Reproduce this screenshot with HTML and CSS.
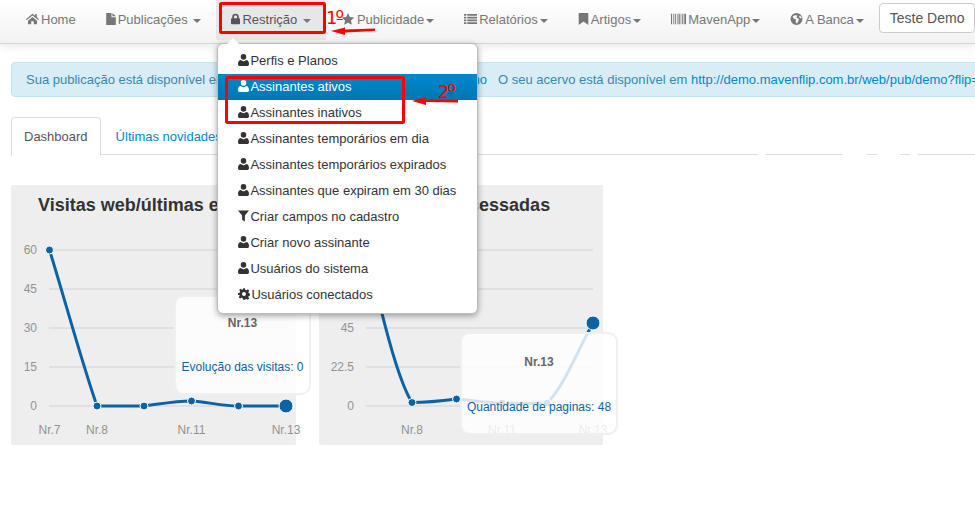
FILE: index.html
```html
<!DOCTYPE html>
<html lang="pt-BR">
  <head>
    <meta charset="UTF-8" />
    <title>Dashboard</title>
    <link rel="stylesheet" href="styles.css">
  </head>

  <body>
    <svg class="icon-defs" width="0" height="0">
      <symbol id="i-home" viewBox="0 1 14 12.500"><path d="M7 1.500 0 7.400l.9 1L7 3.400l6.100 5 .9-1-2.300-2V2H9.600v1.700z M2.200 9 7 5l4.800 4v4H8.400V9.800H5.600V13H2.200z"/></symbol>
      <symbol id="i-file" viewBox="2 1 10 12.500"><path d="M2 1h5.500v4.500H12V13.500H2z M8.500 1 12 4.500H8.500z"/></symbol>
      <symbol id="i-lock" viewBox="1.500 .5 11 13"><path d="M3 6V4.500a4 4 0 0 1 8 0V6h.5a1 1 0 0 1 1 1v5.500a1 1 0 0 1-1 1h-9a1 1 0 0 1-1-1V7a1 1 0 0 1 1-1zm2 0h4V4.500a2 2 0 0 0-4 0z"/></symbol>
      <symbol id="i-star" viewBox="0 .5 14 13"><path d="m7 .5 2 4.400 4.800.5-3.600 3.200 1 4.700L7 11l-4.200 2.300 1-4.700L.2 5.400 5 4.900z"/></symbol>
      <symbol id="i-list" viewBox="0 2 14 11"><path d="M0 2h2.500v2H0z M3.500 2H14v2H3.500z M0 5h2.500v2H0z M3.500 5H14v2H3.500z M0 8h2.500v2H0z M3.500 8H14v2H3.500z M0 11h2.500v2H0z M3.500 11H14v2H3.500z"/></symbol>
      <symbol id="i-bookmark" viewBox="2 1 10 12.500"><path d="M2 1h10v12.500L7 9.800l-5 3.700z"/></symbol>
      <symbol id="i-barcode" viewBox="0 2 14 10"><path d="M0 2h1v10H0z M2 2h.6v10H2z M3.500 2h1v10h-1z M5.500 2h.6v10h-.6z M7 2h1.200v10H7z M9 2h.6v10H9z M10.500 2h1v10h-1z M12.400 2H14v10h-1.600z"/></symbol>
      <symbol id="i-globe" viewBox=".8 .8 12.400 12.400"><path fill-rule="evenodd" d="M7 .8a6.200 6.200 0 1 1 0 12.400A6.200 6.200 0 0 1 7 .8z M5 3 3 4.500l1 2 2.500 1L6 10l1.500 2 1.500-3 .5-2L7 5.500 8 3.500z M10.500 3.500l-1 1.500 2 1.500 1-1z"/></symbol>
      <symbol id="i-user" viewBox="1 .5 12 13"><path d="M7 .5a3 3 0 0 1 3 3.200 3 3 0 0 1-6 0A3 3 0 0 1 7 .5z M4.200 7a4 4 0 0 0 5.600 0c2.200 0 3.200 2 3.200 4.500 0 1.300-.8 2-2 2H3c-1.200 0-2-.7-2-2C1 9 2 7 4.200 7z"/></symbol>
      <symbol id="i-filter" viewBox="1 1.500 12 12"><path d="M1 1.500h12L8.500 7v6.500l-3-2V7z"/></symbol>
      <symbol id="i-cog" viewBox=".6 .8 12.800 12.400"><path fill-rule="evenodd" d="M6 .8h2l.4 1.800 1.200.5L11.200 2l1.400 1.400-1 1.600.5 1.200 1.800.4v2l-1.800.4-.5 1.200 1 1.600-1.400 1.400-1.600-1-1.200.5L8 13.200H6l-.4-1.800-1.200-.5-1.600 1-1.400-1.400 1-1.600-.5-1.200L.6 8V6l1.800-.4.5-1.200-1-1.600L3.300 1.400l1.600 1 1.200-.5z M7 4.900a2.100 2.100 0 1 0 0 4.200 2.100 2.100 0 0 0 0-4.200z"/></symbol>
    </svg>

    <nav class="navbar">
      <ul class="nav">
        <li class="nav-item"><a><svg class="icon w13"><use href="#i-home"/></svg>Home</a></li>
        <li class="nav-item"><a><svg class="icon w10"><use href="#i-file"/></svg>Publicações <b class="caret"></b></a></li>
        <li class="nav-item open">
          <a><svg class="icon w9"><use href="#i-lock"/></svg>Restrição <b class="caret"></b></a>
          <ul class="dropdown">
            <li><svg class="icon w11"><use href="#i-user"/></svg>Perfis e Planos</li>
            <li class="active"><svg class="icon w11"><use href="#i-user"/></svg>Assinantes ativos</li>
            <li><svg class="icon w11"><use href="#i-user"/></svg>Assinantes inativos</li>
            <li><svg class="icon w11"><use href="#i-user"/></svg>Assinantes temporários em dia</li>
            <li><svg class="icon w11"><use href="#i-user"/></svg>Assinantes temporários expirados</li>
            <li><svg class="icon w11"><use href="#i-user"/></svg>Assinantes que expiram em 30 dias</li>
            <li><svg class="icon w11"><use href="#i-filter"/></svg>Criar campos no cadastro</li>
            <li><svg class="icon w11"><use href="#i-user"/></svg>Criar novo assinante</li>
            <li><svg class="icon w11"><use href="#i-user"/></svg>Usuários do sistema</li>
            <li><svg class="icon w12"><use href="#i-cog"/></svg>Usuários conectados</li>
          </ul>
        </li>
        <li class="nav-item"><a><svg class="icon w14"><use href="#i-star"/></svg>Publicidade<b class="caret"></b></a></li>
        <li class="nav-item"><a><svg class="icon w13"><use href="#i-list"/></svg>Relatórios<b class="caret"></b></a></li>
        <li class="nav-item"><a><svg class="icon w11"><use href="#i-bookmark"/></svg>Artigos<b class="caret"></b></a></li>
        <li class="nav-item"><a><svg class="icon w15"><use href="#i-barcode"/></svg>MavenApp<b class="caret"></b></a></li>
        <li class="nav-item"><a><svg class="icon w13"><use href="#i-globe"/></svg>A Banca<b class="caret"></b></a></li>
      </ul>
      <div class="search-box">Teste Demo</div>
    </nav>

    <main class="content">
      <div class="alert">
        <span>Sua publicação está disponível em <a>http://demo.mavenflip.com.br/web/pub/demo</a></span>
        <span>O seu acervo está disponível em <a>http://demo.mavenflip.com.br/web/pub/demo?flip=</a></span>
      </div>

      <ul class="tabs">
        <li class="tab active">Dashboard</li>
        <li class="tab">Últimas novidades</li>
      </ul>

      <div class="charts">
        <section class="chart-card">
          <h3>Visitas web/últimas edições</h3>
          <svg class="chart" width="285" height="220">
            <g class="grid">
              <line x1="38" x2="275" y1="25" y2="25"/><line x1="38" x2="275" y1="64" y2="64"/>
              <line x1="38" x2="275" y1="103" y2="103"/><line x1="38" x2="275" y1="142" y2="142"/>
              <line x1="38" x2="275" y1="181" y2="181"/>
            </g>
            <g class="y-labels">
              <text x="26" y="29">60</text><text x="26" y="68">45</text><text x="26" y="107">30</text>
              <text x="26" y="146">15</text><text x="26" y="185">0</text>
            </g>
            <g class="x-labels">
              <text x="38.500" y="209">Nr.7</text><text x="86" y="209">Nr.8</text>
              <text x="180.500" y="209">Nr.11</text><text x="275" y="209">Nr.13</text>
            </g>
            <path class="line" d="M38.500 25C54 75 70 135 86 181C102 181 117 181 133 181C149 179 165 176 180.500 176C196 177 212 181 227.500 181C243 181 259 181 275 181"/>
            <g class="points">
              <circle cx="38.500" cy="25" r="4"/><circle cx="86" cy="181" r="4"/><circle cx="133" cy="181" r="4"/>
              <circle cx="180.500" cy="176" r="4"/><circle cx="227.500" cy="181" r="4"/><circle cx="275" cy="181" r="7"/>
            </g>
          </svg>
          <div class="chart-tip tip-visits">
            <div class="tip-title">Nr.13</div>
            <div class="tip-value">Evolução das visitas: 0</div>
          </div>
        </section>

        <section class="chart-card">
          <h3>Páginas mais acessadas</h3>
          <svg class="chart" width="284" height="220">
            <g class="grid">
              <line x1="47" x2="274" y1="25" y2="25"/><line x1="47" x2="274" y1="64" y2="64"/>
              <line x1="47" x2="274" y1="103" y2="103"/><line x1="47" x2="274" y1="142" y2="142"/>
              <line x1="47" x2="274" y1="181" y2="181"/>
            </g>
            <g class="y-labels">
              <text x="35" y="29">90</text><text x="35" y="68">67.5</text><text x="35" y="107">45</text>
              <text x="35" y="146">22.5</text><text x="35" y="185">0</text>
            </g>
            <g class="x-labels">
              <text x="93" y="209">Nr.8</text><text x="183" y="209">Nr.11</text><text x="274" y="209">Nr.13</text>
            </g>
            <path class="line" d="M47 25C60 75 76 150 93 177.500C108 177.500 122 176 137.500 174C153 175 168 178 183 178C198 178 213 179 228 178C243 165 259 125 274 98"/>
            <g class="points">
              <circle cx="47" cy="25" r="4"/><circle cx="93" cy="177.500" r="4"/><circle cx="137.500" cy="174" r="4"/>
              <circle cx="183" cy="178" r="4"/><circle cx="228" cy="178" r="4"/><circle cx="274" cy="98" r="7"/>
            </g>
          </svg>
          <div class="chart-tip tip-pages">
            <div class="tip-title">Nr.13</div>
            <div class="tip-value">Quantidade de paginas: 48</div>
          </div>
        </section>
      </div>
    </main>

    <!-- marcacoes em vermelho feitas sobre a captura -->
    <svg class="marks" width="975" height="530">
      <rect class="mark-box" x="220.500" y="3.500" width="104" height="29" rx="1"/>
      <rect class="mark-box" x="226.500" y="77.500" width="177" height="45" rx="1"/>
      <path class="mark-arrow" d="M331 31 345 27.500 345 29.500 375 28.500 375 31 345 32.500 345 35z"/>
      <path class="mark-arrow" d="M412 101 426 97 426 99.500 458 100 458 102.500 426 102 426 105z"/>
      <text class="mark-text" x="326" y="24">1º</text>
      <text class="mark-text" x="438" y="98">2º</text>
    </svg>
  </body>
</html>
```

FILE: styles.css
```css
html, body {
  margin: 0;
  height: 530px;
  overflow: hidden;
  background: white;
  font-family: "Liberation Sans", Arial, sans-serif;
  font-size: 13px;
  color: #333;
}

ul {
  list-style: none;
  margin: 0;
  padding: 0;
}

.icon-defs {
  display: block;
  height: 0;
}

.icon {
  height: 12px;
  margin-right: 2px;
  fill: currentColor;
  vertical-align: -1px;
}

.w9 { width: 9px; }
.w10 { width: 10px; }
.w11 { width: 11px; }
.w12 { width: 12px; }
.w13 { width: 13px; }
.w14 { width: 14px; }
.w15 { width: 15px; }

/* barra de cima */
.navbar {
  display: flex;
  height: 44px;
  padding-left: 11px;
  box-sizing: border-box;
  background: linear-gradient(#ffffff, #f2f2f2);
  border-bottom: 1px solid #d4d4d4;
  box-shadow: 0 2px 10px rgba(0, 0, 0, 0.1);
  position: relative;
  z-index: 5;
}

.nav {
  display: flex;
}

.nav-item {
  position: relative;
  height: 40px;
}

.nav-item > a {
  display: block;
  padding: 12px 15px 0;
  height: 28px;
  line-height: 15px;
  color: #777;
  white-space: nowrap;
}

.nav-item.open > a {
  background: #e7e7e7;
  color: #555;
}

.caret {
  display: inline-block;
  width: 0;
  height: 0;
  margin-left: 2px;
  vertical-align: middle;
  border-top: 4px solid #777;
  border-left: 4px solid transparent;
  border-right: 4px solid transparent;
}

.search-box {
  margin-top: 3px;
  width: 200px;
  height: 28px;
  padding-left: 10px;
  line-height: 28px;
  font-size: 14px;
  color: #555;
  background: white;
  border: 1px solid #ccc;
  border-radius: 4px;
}

/* menu aberto */
.dropdown {
  position: absolute;
  top: 43px;
  left: 1px;
  width: 259px;
  padding: 4px 0 5px;
  background: white;
  border: 1px solid #bbb;
  border-radius: 6px;
  box-shadow: 0 2px 6px rgba(0, 0, 0, 0.35);
  z-index: 10;
}

.dropdown::before {
  content: "";
  position: absolute;
  top: -6px;
  left: 9px;
  border-left: 6px solid transparent;
  border-right: 6px solid transparent;
  border-bottom: 6px solid white;
}

.dropdown li {
  height: 26px;
  line-height: 26px;
  padding-left: 20px;
  color: #333;
  white-space: nowrap;
}

.dropdown .icon {
  margin-right: 1px;
}

.dropdown li.active {
  color: white;
  background: linear-gradient(#0088cc, #0077b3);
}

/* conteudo */
.content {
  padding: 18px 0 0 11px;
}

.alert {
  display: flex;
  gap: 11px;
  width: 1000px;
  height: 33px;
  line-height: 33px;
  padding-left: 14px;
  white-space: nowrap;
  color: #3a87ad;
  background: #d9edf7;
  border: 1px solid #bce8f1;
  border-radius: 4px;
}

.alert a {
  color: #0088cc;
}

.tabs {
  display: flex;
  margin-top: 20px;
  height: 38px;
  background: linear-gradient(to right, #ddd 747px, white 747px, white 754px, #ddd 754px, #ddd 832px, white 832px, white 856px, #ddd 856px, #ddd 866px, white 866px, white 889px, #ddd 889px, #ddd 899px, white 899px, white 907px, #ddd 907px) bottom / 100% 1px no-repeat;
}

.tab {
  height: 37px;
  padding: 0 14px;
  line-height: 37px;
  color: #0088cc;
  border: 1px solid transparent;
}

.tab.active {
  padding: 0 12px;
  color: #555;
  background: white;
  border-color: #ddd;
  border-bottom-color: white;
  border-radius: 4px 4px 0 0;
}

.charts {
  display: flex;
  gap: 23px;
  margin-top: 30px;
}

.chart-card {
  position: relative;
  width: 285px;
  height: 260px;
  background: #eeeeee;
  border-radius: 2px;
}

.chart-card + .chart-card {
  width: 284px;
}

.chart-card h3 {
  margin: 0;
  height: 40px;
  padding-left: 27px;
  line-height: 40px;
  font-size: 18px;
  color: #333;
  white-space: nowrap;
}

.chart-card + .chart-card h3 {
  padding-left: 20px;
}

.chart {
  display: block;
  overflow: visible;
}

.grid line {
  stroke: #e0e0e0;
  stroke-width: 2;
}

.y-labels text,
.x-labels text {
  font-size: 12px;
  fill: #929292;
}

.y-labels text {
  text-anchor: end;
}

.x-labels text {
  text-anchor: middle;
}

.line {
  fill: none;
  stroke: #0b62a4;
  stroke-width: 3;
}

.points circle {
  fill: #0b62a4;
  stroke: white;
  stroke-width: 1;
}

.chart-tip {
  position: absolute;
  box-sizing: border-box;
  font-size: 12px;
  text-align: center;
  white-space: nowrap;
  background: rgba(255, 255, 255, 0.82);
  border: 2px solid rgba(238, 238, 238, 0.9);
  border-radius: 10px;
}

.tip-visits {
  left: 163px;
  top: 110px;
  width: 137px;
  height: 100px;
}

.tip-pages {
  left: 141px;
  top: 147px;
  width: 158px;
  height: 103px;
}

.tip-title {
  margin-top: 19px;
  line-height: 14px;
  font-weight: bold;
  color: #666;
}

.tip-value {
  margin-top: 30px;
  line-height: 14px;
  color: #0b62a4;
}

.tip-pages .tip-title {
  margin-top: 21px;
}

.tip-pages .tip-value {
  margin-top: 31px;
}

/* marcacoes vermelhas */
.marks {
  position: absolute;
  top: 0;
  left: 0;
  z-index: 20;
  pointer-events: none;
}

.mark-box {
  fill: none;
  stroke: #f00;
  stroke-width: 3;
}

.mark-arrow {
  fill: #f00;
}

.mark-text {
  font-family: "DejaVu Sans", sans-serif;
  font-size: 18px;
  letter-spacing: -2px;
  fill: #f00;
}
```
